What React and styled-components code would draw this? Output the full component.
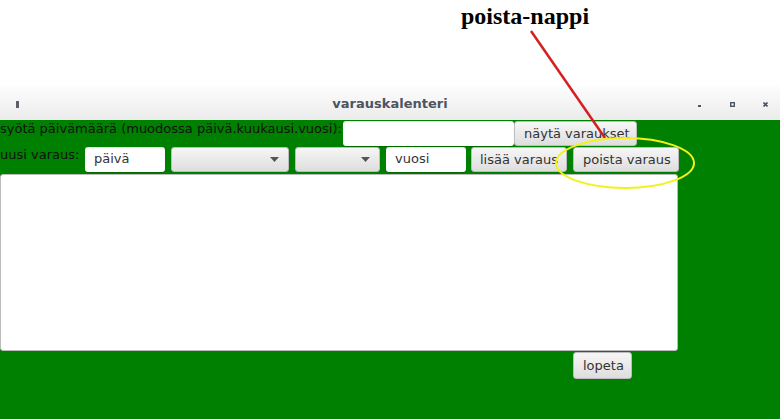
import React from "react";
import styled, { createGlobalStyle } from "styled-components";

const GlobalStyle = createGlobalStyle`
    html, body {
        margin: 0;
        padding: 0;
        background: #fff;
    }
    body {
        font-family: "DejaVu Sans", sans-serif;
    }
`

const Page = styled.div`
    position: relative;
    width: 780px;
    height: 419px;
    overflow: hidden;
    display: flex;
    flex-direction: column;
`
const Annotation = styled.div`
    height: 86px;
    flex-shrink: 0;
`
const Note = styled.div`
    position: absolute;
    left: 461px;
    top: 3px;
    font-family: "Liberation Serif", serif;
    font-weight: bold;
    font-size: 24px;
    color: #000;
`
const Overlay = styled.svg`
    position: absolute;
    left: 0;
    top: 0;
    pointer-events: none;
`
const TitleBar = styled.div`
    height: 34px;
    flex-shrink: 0;
    display: flex;
    align-items: center;
    background: linear-gradient(#fdfdfd, #ebebeb);
    padding: 0 12px 0 16px;
`
const AppIcon = styled.span`
    width: 3px;
    height: 7px;
    background: #5a6068;
    margin-top: 2px;
`
const Title = styled.div`
    flex: 1;
    text-align: center;
    font-weight: bold;
    font-size: 13px;
    color: #4c5560;
    padding-left: 64px;
    margin-top: 1px;
`
const WinButtons = styled.div`
    display: flex;
    gap: 28px;
    align-items: center;
    margin-top: 2px;
`
const WinBtn = styled.svg`
    width: 5px;
    height: 5px;
`
const Content = styled.div`
    flex: 1;
    background: #008000;
    padding-top: 1px;
`
const Row = styled.div`
    display: flex;
    align-items: flex-start;
    height: ${p => p.h}px;
`
const Label = styled.div`
    width: ${p => p.w}px;
    font-size: 13px;
    line-height: 16px;
    color: #111;
    white-space: nowrap;
`
const Field = styled.div`
    box-sizing: border-box;
    width: ${p => p.w}px;
    height: ${p => p.h || 25}px;
    margin-left: ${p => p.ml || 0}px;
    background: #fff;
    border-radius: 3px;
    box-shadow: inset 0 1px 1px rgba(0,0,0,0.12), 0 1px 0 rgba(0,0,0,0.18);
    font-size: 13px;
    color: #333;
    padding: 4px 9px;
`
const Button = styled.div`
    box-sizing: border-box;
    width: ${p => p.w}px;
    height: ${p => p.h || 25}px;
    margin-left: ${p => p.ml || 0}px;
    background: linear-gradient(#f6f6f6, #dedede);
    border: 1px solid #bdbdbd;
    border-radius: 3px;
    font-size: 13px;
    color: #333;
    display: flex;
    align-items: center;
    padding-left: ${p => p.pl || 8}px;
    white-space: nowrap;
    overflow: hidden;
`
const Combo = styled(Button)`
    justify-content: flex-end;
    padding-right: 9px;
    svg { width: 9px; height: 5px; }
`
const TextArea = styled.div`
    box-sizing: border-box;
    width: 678px;
    height: 177px;
    margin-top: 1px;
    background: #fff;
    border: 1px solid #bcbcbc;
    border-radius: 3px;
`
const Footer = styled.div`
    display: flex;
    padding: 1px 0 0 573px;
`

const Arrow = () => (
    <svg viewBox="0 0 9 5"><path d="M0 0 L9 0 L4.5 5 Z" fill="#555" /></svg>
)

export default function App() {
    return (
        <Page>
            <GlobalStyle />
            <Annotation />
            <TitleBar>
                <AppIcon />
                <Title>varauskalenteri</Title>
                <WinButtons>
                    <WinBtn viewBox="0 0 5 5"><rect x="1" y="3" width="3" height="2" fill="#4c5560" /></WinBtn>
                    <WinBtn viewBox="0 0 5 5"><rect x="0.7" y="0.7" width="3.6" height="3.6" fill="none" stroke="#4c5560" strokeWidth="1.4" /></WinBtn>
                    <WinBtn viewBox="0 0 5 5"><path d="M0.5 0.5 L4.5 4.5 M4.5 0.5 L0.5 4.5" stroke="#4c5560" strokeWidth="1.6" /></WinBtn>
                </WinButtons>
            </TitleBar>
            <Content>
                <Row h={26}>
                    <Label w={343}>syötä päivämäärä (muodossa päivä.kuukausi.vuosi):</Label>
                    <Field w={171} />
                    <Button w={123} pl={9}>näytä varaukset</Button>
                </Row>
                <Row h={26}>
                    <Label w={85}>uusi varaus:</Label>
                    <Field w={80}>päivä</Field>
                    <Combo w={118} ml={6}><Arrow /></Combo>
                    <Combo w={85} ml={6}><Arrow /></Combo>
                    <Field w={80} ml={6}>vuosi</Field>
                    <Button w={96} ml={5} pl={8}>lisää varaus</Button>
                    <Button w={106} ml={6} pl={9}>poista varaus</Button>
                </Row>
                <TextArea />
                <Footer>
                    <Button w={59} h={27} pl={9}>lopeta</Button>
                </Footer>
            </Content>
            <Note>poista-nappi</Note>
            <Overlay width="780" height="419">
                <line x1="531" y1="31" x2="605" y2="138" stroke="#d42020" strokeWidth="2.5" />
                <ellipse cx="625" cy="163" rx="69" ry="25" fill="none" stroke="#f2f21a" strokeWidth="2" />
            </Overlay>
        </Page>
    )
}
